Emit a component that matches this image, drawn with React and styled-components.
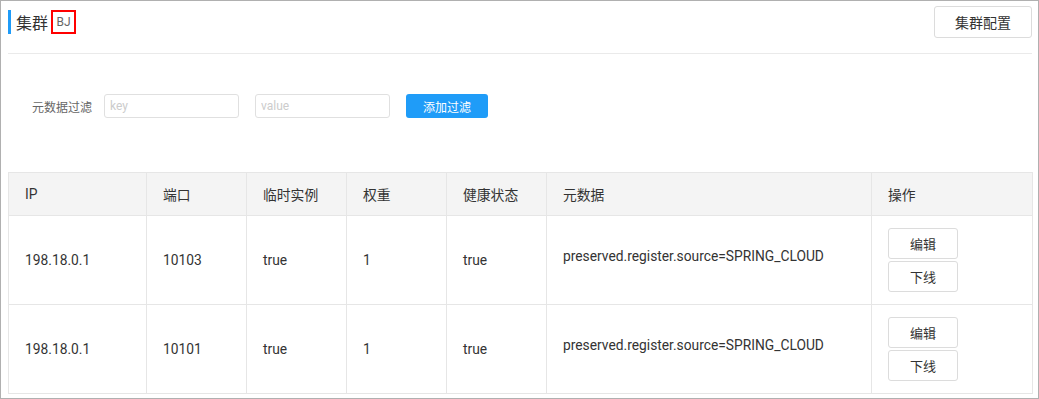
import React from 'react';
import styled, { createGlobalStyle } from 'styled-components';

const GlobalStyle = createGlobalStyle`
  html, body {
    margin: 0;
    padding: 0;
    background: #fff;
  }
  body {
    font-family: Roboto, "Noto Sans CJK SC", sans-serif;
    color: #333;
  }
`;

const Frame = styled.div`
  width: 1039px;
  height: 399px;
  box-sizing: border-box;
  border: 1px solid #b0b0b0;
  padding: 0 6px 0 7px;
  overflow: hidden;
`;

const TopBar = styled.div`
  display: flex;
  justify-content: space-between;
  align-items: flex-start;
  height: 52px;
  border-bottom: 1px solid #eaeaea;
`;

const Title = styled.div`
  display: flex;
  align-items: center;
  margin-top: 9px;
  height: 24px;
  border-left: 3px solid #1e9bf8;
  padding-left: 5px;
  font-size: 16px;
  color: #333;
`;

const Tag = styled.span`
  display: inline-flex;
  align-items: center;
  justify-content: center;
  margin-left: 3px;
  width: 21px;
  height: 20px;
  border: 2px solid #f00;
  font-size: 12px;
  color: #666;
`;

const Button = styled.button`
  box-sizing: border-box;
  width: ${(p) => p.width || 70}px;
  height: ${(p) => p.height || 31}px;
  margin: ${(p) => p.margin || 0};
  padding: 0;
  background: #fff;
  border: 1px solid #dcdcdc;
  border-radius: 3px;
  font-family: Roboto, "Noto Sans CJK SC", sans-serif;
  font-size: ${(p) => p.size || 13}px;
  color: #333;
  display: block;
`;

const PrimaryButton = styled.button`
  box-sizing: border-box;
  width: 82px;
  height: 24px;
  margin-left: 16px;
  padding: 0;
  border: none;
  border-radius: 3px;
  background: #1f9cf8;
  color: #fff;
  font-family: Roboto, "Noto Sans CJK SC", sans-serif;
  font-size: 12px;
`;

const FilterRow = styled.div`
  display: flex;
  align-items: center;
  margin-top: 40px;
  padding-left: 24px;
  height: 24px;
`;

const FilterLabel = styled.span`
  font-size: 12px;
  color: #666;
  margin-right: 12px;
`;

const Input = styled.input`
  box-sizing: border-box;
  width: 135px;
  height: 24px;
  margin-left: ${(p) => p.gap || 0}px;
  padding: 0 5px;
  border: 1px solid #e0e0e0;
  border-radius: 3px;
  font-family: Roboto, sans-serif;
  font-size: 12px;
  color: #333;
  outline: none;
  &::placeholder {
    color: #ccc;
  }
`;

const Table = styled.table`
  margin-top: 54px;
  width: 1024px;
  border-collapse: collapse;
  table-layout: fixed;
  font-size: 13.8px;
  color: #333;
`;

const Th = styled.th`
  height: 43px;
  box-sizing: border-box;
  padding: 0 0 0 16px;
  text-align: left;
  font-weight: normal;
  background: #f4f4f4;
  border: 1px solid #e6e6e6;
`;

const Td = styled.td`
  height: 89px;
  box-sizing: border-box;
  padding: 0 0 ${(p) => p.lift || 0}px 16px;
  border: 1px solid #e6e6e6;
  vertical-align: middle;
`;

const columns = [
  { title: 'IP', width: 138 },
  { title: '端口', width: 100 },
  { title: '临时实例', width: 100 },
  { title: '权重', width: 100 },
  { title: '健康状态', width: 100 },
  { title: '元数据', width: 325 },
  { title: '操作', width: 161 }
];

const instances = [
  { ip: '198.18.0.1', port: 10103, ephemeral: 'true', weight: 1, healthy: 'true', meta: 'preserved.register.source=SPRING_CLOUD' },
  { ip: '198.18.0.1', port: 10101, ephemeral: 'true', weight: 1, healthy: 'true', meta: 'preserved.register.source=SPRING_CLOUD' }
];

export default function App() {
  return (
    <Frame>
      <GlobalStyle />
      <TopBar>
        <Title>
          集群
          <Tag>BJ</Tag>
        </Title>
        <Button width={98} height={32} size={14} margin="5px 0 0 0">集群配置</Button>
      </TopBar>

      <FilterRow>
        <FilterLabel>元数据过滤</FilterLabel>
        <Input placeholder="key" />
        <Input placeholder="value" gap={16} />
        <PrimaryButton>添加过滤</PrimaryButton>
      </FilterRow>

      <Table>
        <colgroup>
          {columns.map((c) => (
            <col key={c.title} style={{ width: c.width }} />
          ))}
        </colgroup>
        <thead>
          <tr>
            {columns.map((c) => (
              <Th key={c.title}>{c.title}</Th>
            ))}
          </tr>
        </thead>
        <tbody>
          {instances.map((row) => (
            <tr key={row.port}>
              <Td>{row.ip}</Td>
              <Td>{row.port}</Td>
              <Td>{row.ephemeral}</Td>
              <Td>{row.weight}</Td>
              <Td>{row.healthy}</Td>
              <Td lift={8}>{row.meta}</Td>
              <Td>
                <Button margin="0 0 2px 0">编辑</Button>
                <Button>下线</Button>
              </Td>
            </tr>
          ))}
        </tbody>
      </Table>
    </Frame>
  );
}
